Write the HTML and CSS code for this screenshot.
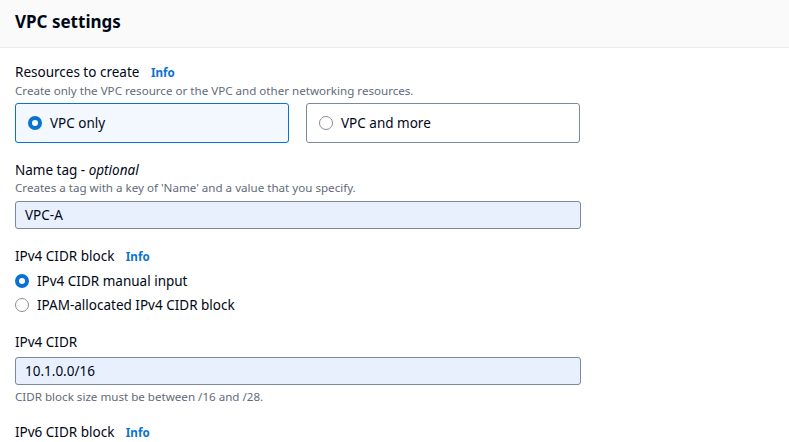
FILE: index.html
```html
<!DOCTYPE html>
<html>
<head>
<meta charset="utf-8">
<link rel="stylesheet" href="styles.css">
</head>
<body>
<div class="panel">
  <div class="header"><h2 class="title">VPC settings</h2></div>
  <div class="content">
    <div class="field">
      <div class="label">Resources to create <a class="info">Info</a></div>
      <div class="desc">Create only the VPC resource or the VPC and other networking resources.</div>
      <div class="tiles">
        <div class="tile selected"><span class="radio on"></span><span class="tile-text">VPC only</span></div>
        <div class="tile"><span class="radio"></span><span class="tile-text">VPC and more</span></div>
      </div>
    </div>
    <div class="field">
      <div class="label">Name tag - <i>optional</i></div>
      <div class="desc">Creates a tag with a key of 'Name' and a value that you specify.</div>
      <div class="input">VPC-A</div>
    </div>
    <div class="field">
      <div class="label">IPv4 CIDR block <a class="info">Info</a></div>
      <div class="options">
        <div class="option"><span class="radio on"></span><span>IPv4 CIDR manual input</span></div>
        <div class="option"><span class="radio"></span><span>IPAM-allocated IPv4 CIDR block</span></div>
      </div>
    </div>
    <div class="field">
      <div class="label">IPv4 CIDR</div>
      <div class="input">10.1.0.0/16</div>
      <div class="hint">CIDR block size must be between /16 and /28.</div>
    </div>
    <div class="field">
      <div class="label">IPv6 CIDR block <a class="info">Info</a></div>
    </div>
  </div>
</div>
</body>
</html>
```
FILE: styles.css
```css
* { box-sizing: border-box; }
body {
  margin: 0;
  background: #ffffff;
  font-family: "Noto Sans", "Open Sans", Arial, sans-serif;
  color: #000716;
  font-size: 13.5px;
  line-height: 20px;
  overflow: hidden;
}
.header {
  height: 48px;
  background: #fafafa;
  border-bottom: 1px solid #e9ebed;
  padding: 11px 15px 0;
}
.title {
  margin: 0;
  font-size: 17px;
  line-height: 22px;
  font-weight: 700;
}
.content {
  padding: 14px 15px 0;
  width: 595px;
  display: flex;
  flex-direction: column;
  gap: 17px;
}
.label { font-size: 13.5px; line-height: 20px; }
.info {
  color: #0972d3;
  font-weight: 700;
  font-size: 11.6px;
  margin-left: 8px;
}
.desc, .hint {
  font-size: 11.6px;
  line-height: 16px;
  color: #5f6b7a;
}
.tiles {
  margin-top: 4px;
  display: grid;
  grid-template-columns: 274px 274px;
  gap: 17px;
}
.tile {
  height: 40px;
  border: 1px solid #7d8998;
  border-radius: 3px;
  display: flex;
  align-items: center;
  padding-left: 12px;
  gap: 8px;
}
.tile.selected {
  border-color: #0972d3;
  background: #f2f8fd;
}
.radio {
  width: 14px;
  height: 14px;
  border-radius: 50%;
  border: 1px solid #8c8c94;
  background: #fff;
  flex: none;
}
.radio.on {
  border: 4px solid #0972d3;
}
.input {
  margin-top: 5px;
  height: 28px;
  width: 566px;
  border: 1px solid #7d8998;
  border-radius: 3px;
  background: #e8f0fe;
  padding: 3px 9px;
  line-height: 20px;
}
.hint { margin-top: 4px; }
.options {
  margin-top: 4px;
  display: flex;
  flex-direction: column;
  gap: 4px;
}
.option {
  display: flex;
  align-items: center;
  gap: 8px;
  height: 20px;
}
```
